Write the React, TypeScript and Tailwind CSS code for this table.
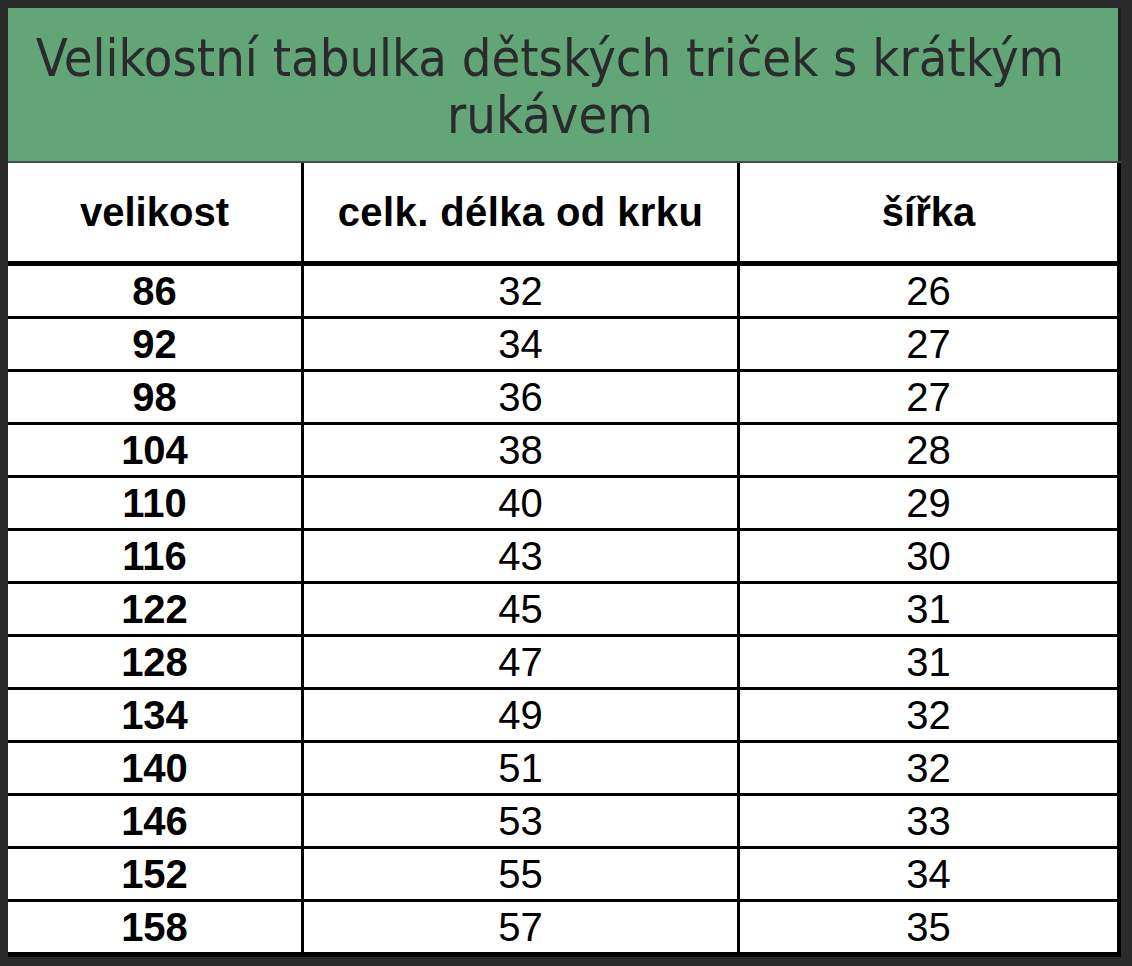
const rows: [string, string, string][] = [
  ['86', '32', '26'],
  ['92', '34', '27'],
  ['98', '36', '27'],
  ['104', '38', '28'],
  ['110', '40', '29'],
  ['116', '43', '30'],
  ['122', '45', '31'],
  ['128', '47', '31'],
  ['134', '49', '32'],
  ['140', '51', '32'],
  ['146', '53', '33'],
  ['152', '55', '34'],
  ['158', '57', '35'],
]

export default function App() {
  return (
    <div className="w-[1132px] h-[966px] bg-[#2b2b2b] pt-[8px] pl-[8px] pr-[11px] pb-[9px] flex flex-col">
      {/* title */}
      <div className="h-[153px] bg-[#62a576] border-r-[3px] border-[#1e1e1e] flex items-start justify-center pt-[22px] pr-[26px]">
        <h1 className="w-[1070px] text-center font-['DejaVu_Sans_Condensed','DejaVu_Sans',sans-serif] font-stretch-condensed text-[52px] leading-[57px] text-[#2b2b2b]">
          Velikostní tabulka dětských triček s krátkým rukávem
        </h1>
      </div>
      <div className="h-[2px] bg-[#4a4a4a]" />

      {/* table */}
      <div className="bg-white border-r-[4px] border-b-[5px] border-black font-['Liberation_Sans',Arial,sans-serif] text-black text-[40px]">
        <div className="grid grid-cols-[296px_436px_1fr] h-[103px] border-b-[5px] border-black font-bold">
          <div className="border-r-[3px] border-black flex items-center justify-center">velikost</div>
          <div className="border-r-[3px] border-black flex items-center justify-center tracking-[0.4px]">celk. délka od krku</div>
          <div className="flex items-center justify-center">šířka</div>
        </div>
        {rows.map(([size, len, width], i) => (
          <div
            key={size}
            className={
              i < rows.length - 1
                ? 'grid grid-cols-[296px_436px_1fr] h-[53px] border-b-[3px] border-black leading-none'
                : 'grid grid-cols-[296px_436px_1fr] h-[50px] leading-none'
            }
          >
            <div className="border-r-[3px] border-black flex items-center justify-center font-bold">{size}</div>
            <div className="border-r-[3px] border-black flex items-center justify-center">{len}</div>
            <div className="flex items-center justify-center">{width}</div>
          </div>
        ))}
      </div>
    </div>
  )
}
